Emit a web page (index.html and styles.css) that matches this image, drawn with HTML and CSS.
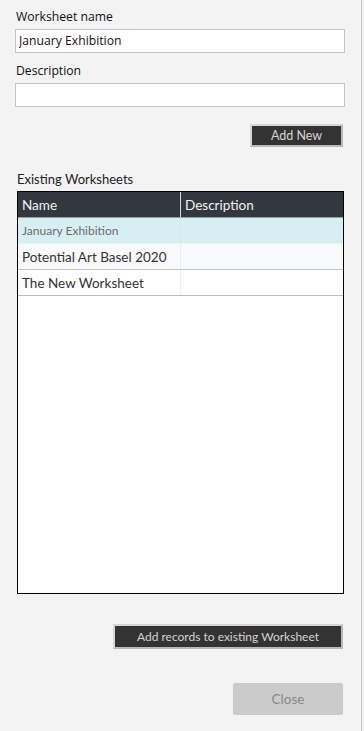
FILE: index.html
```html
<!DOCTYPE html>
<html lang="en">
<head>
  <meta charset="UTF-8">
  <meta name="viewport" content="width=device-width, initial-scale=1.0">
  <title>Worksheets</title>
  <link rel="stylesheet" href="styles.css">
</head>
<body>
  <div class="dialog">
    <div class="form-group">
      <label for="wsName">Worksheet name</label>
      <input type="text" id="wsName" value="January Exhibition">
    </div>
    <div class="form-group">
      <label for="wsDesc">Description</label>
      <input type="text" id="wsDesc">
    </div>
    <div class="actions">
      <button class="btn-dark btn-add">Add New</button>
    </div>

    <div class="list-title">Existing Worksheets</div>
    <div class="grid">
      <div class="grid-head">
        <div class="cell">Name</div>
        <div class="cell">Description</div>
      </div>
      <div class="grid-row selected">
        <div class="cell">January Exhibition</div>
        <div class="cell"></div>
      </div>
      <div class="grid-row alt">
        <div class="cell">Potential Art Basel 2020</div>
        <div class="cell"></div>
      </div>
      <div class="grid-row">
        <div class="cell">The New Worksheet</div>
        <div class="cell"></div>
      </div>
    </div>

    <div class="actions actions-records">
      <button class="btn-dark btn-records">Add records to existing Worksheet</button>
    </div>
    <div class="actions actions-close">
      <button class="btn-close" disabled>Close</button>
    </div>
  </div>
</body>
</html>
```

FILE: styles.css
```css
body {
  margin: 0;
  padding: 0;
  background: #f3f3f3;
  font-family: "Open Sans", "DejaVu Sans", sans-serif;
  height: 731px;
  overflow: hidden;
}
.dialog {
  width: 362px;
  height: 731px;
  box-sizing: border-box;
  border-right: 1px solid #c8c8c8;
  padding: 8px 16px 0 15px;
}
.form-group {
  margin-bottom: 9px;
}
label {
  display: block;
  margin: 0 0 3px 1px;
  font-size: 12.2px;
  line-height: 18px;
  color: #111;
}
input {
  display: block;
  width: 100%;
  height: 24px;
  box-sizing: border-box;
  margin: 0;
  padding: 0 3px 1px;
  border: 1px solid #c4c4c4;
  background: #fff;
  font-family: "Open Sans", "DejaVu Sans", sans-serif;
  font-size: 12.2px;
  color: #1b0f0f;
  outline: none;
}
.actions {
  display: flex;
  justify-content: flex-end;
}
.btn-dark {
  background: #333;
  color: #d4d4d4;
  border: 2px solid #b8b8b8;
  border-top-color: #d6d6d6;
  border-left-color: #d6d6d6;
  font-family: "Lato", "Liberation Sans", sans-serif;
  font-size: 12.5px;
  padding: 0;
  margin-right: 2px;
  cursor: pointer;
}
.btn-add {
  width: 93px;
  height: 23px;
  margin-top: 8px;
}
.list-title {
  margin: 24px 0 0 2px;
  font-family: "Lato", "Liberation Sans", sans-serif;
  font-size: 13px;
  line-height: 16px;
  color: #222;
}
.grid {
  margin: 4px 1px 0 2px;
  height: 403px;
  box-sizing: border-box;
  border: 1px solid #000;
  background: #fff;
  font-family: "Lato", "Liberation Sans", sans-serif;
}
.grid-head,
.grid-row {
  display: grid;
  grid-template-columns: 162px 1fr;
}
.grid-head {
  height: 25px;
  background: #33373e;
  color: #f2f2f2;
  font-size: 13.5px;
  border-bottom: 1px solid #9aa0a6;
}
.grid-head .cell {
  display: flex;
  align-items: center;
  padding-left: 4px;
}
.grid-head .cell + .cell {
  border-left: 1px solid #d8d8d8;
}
.grid-row {
  height: 25px;
  font-size: 13.5px;
  color: #333;
  border-bottom: 1px solid #ddd;
}
.grid-row .cell {
  display: flex;
  align-items: center;
  padding-left: 4px;
}
.grid-row .cell + .cell {
  border-left: 1px dotted #e0e0e0;
}
.grid-row.selected {
  background: #d7eff3;
  color: #6b6b6b;
  font-size: 12px;
  border-bottom-color: #e6f4f6;
}
.grid-row.alt {
  background: #f8f9fa;
  border-bottom: 1px solid #c4c4c4;
}
.grid-row:last-child {
  border-bottom: 1px solid #bdbdbd;
}
.actions-records {
  margin-top: 30px;
}
.btn-records {
  width: 230px;
  height: 25px;
  font-size: 12px;
}
.actions-close {
  margin-top: 34px;
}
.btn-close {
  width: 110px;
  height: 32px;
  margin-right: 2px;
  background: #cbcbcb;
  color: #888;
  border: none;
  border-radius: 2px;
  font-family: "Lato", "Liberation Sans", sans-serif;
  font-size: 13.5px;
}
```
